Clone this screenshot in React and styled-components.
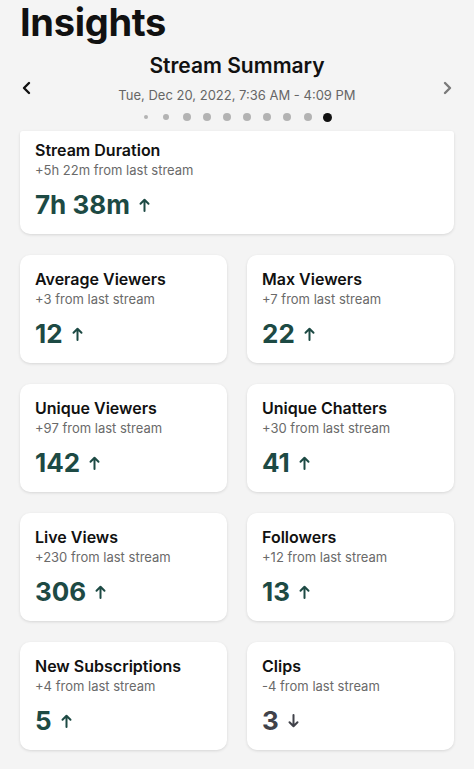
import styled, { createGlobalStyle } from 'styled-components'

const Global = createGlobalStyle`
  body {
    margin: 0;
    background: #f4f4f4;
    font-family: Inter, "Noto Sans", sans-serif;
    color: #111;
  }
`

const Page = styled.div`
  width: 474px;
  height: 769px;
  overflow: hidden;
  background: #f4f4f4;
`

const Header = styled.header`
  padding: 0 20px 9px;
`

const Title = styled.h1`
  margin: 0;
  font-size: 38px;
  line-height: 44px;
  font-weight: 700;
  letter-spacing: -0.3px;
`

const Nav = styled.div`
  display: flex;
  align-items: center;
  margin-top: 9px;
`

const NavButton = styled.button`
  border: 0;
  background: none;
  padding: 0;
  width: 14px;
  display: flex;
  justify-content: center;
  color: ${({ $muted }) => ($muted ? '#7a7a7a' : '#111')};
`

const Center = styled.div`
  flex: 1;
  display: flex;
  flex-direction: column;
  align-items: center;
`

const Summary = styled.h2`
  margin: 0;
  font-size: 21px;
  line-height: 26px;
  font-weight: 600;
`

const DateLine = styled.div`
  margin-top: 6px;
  font-size: 13px;
  line-height: 20px;
  color: #666;
`

const Dots = styled.div`
  display: flex;
  margin-top: 7px;
  height: 10px;
  align-items: center;
`

const DotSlot = styled.span`
  width: 20.2px;
  display: flex;
  justify-content: center;
`

const Dot = styled.span`
  width: ${({ $size }) => $size}px;
  height: ${({ $size }) => $size}px;
  border-radius: 50%;
  background: ${({ $active }) => ($active ? '#111' : '#b3b3b3')};
`

const Content = styled.main`
  padding: 0 20px;
  display: flex;
  flex-direction: column;
  gap: 21px;
`

const Grid = styled.div`
  display: grid;
  grid-template-columns: 1fr 1fr;
  column-gap: 20px;
  row-gap: 21px;
`

const Card = styled.section`
  background: #fff;
  border-radius: ${({ $clipped }) => ($clipped ? '3px 3px 10px 10px' : '10px')};
  box-shadow: 0 1px 3px rgba(0, 0, 0, 0.12);
  padding: ${({ $clipped }) => ($clipped ? '9px' : '14px')} 15px 13px;
`

const CardTitle = styled.div`
  font-size: 16px;
  line-height: 20px;
  font-weight: 600;
  color: #111;
`

const Delta = styled.div`
  font-size: 13px;
  line-height: 20px;
  color: #6a6a6a;
`

const Value = styled.div`
  margin-top: 9px;
  display: flex;
  align-items: center;
  gap: 9px;
  font-size: 26px;
  line-height: 32px;
  font-weight: 700;
  color: ${({ $down }) => ($down ? '#41424a' : '#1d4a44')};
`

const ArrowIcon = ({ down }) => (
  <svg width="11" height="14" viewBox="0 0 11 14" fill="none" stroke="currentColor" strokeWidth="2" strokeLinecap="round" strokeLinejoin="round" style={{ transform: down ? 'rotate(180deg)' : 'none' }}>
    <path d="M5.5 13V2M1.5 5.8L5.5 1.8L9.5 5.8" />
  </svg>
)

const Chevron = ({ right }) => (
  <svg width="10" height="14" viewBox="0 0 10 14" fill="none" stroke="currentColor" strokeWidth="2.4" strokeLinecap="round" strokeLinejoin="round">
    <path d={right ? 'M3 2L8 7L3 12' : 'M7 2L2 7L7 12'} />
  </svg>
)

function Stat({ title, delta, value, down, clipped }) {
  return (
    <Card $clipped={clipped}>
      <CardTitle>{title}</CardTitle>
      <Delta>{delta} from last stream</Delta>
      <Value $down={down}>
        {value}
        <ArrowIcon down={down} />
      </Value>
    </Card>
  )
}

const dots = [4, 6, 8, 8, 8, 8, 8, 8, 8, 9]

const stats = [
  { title: 'Average Viewers', delta: '+3', value: '12' },
  { title: 'Max Viewers', delta: '+7', value: '22' },
  { title: 'Unique Viewers', delta: '+97', value: '142' },
  { title: 'Unique Chatters', delta: '+30', value: '41' },
  { title: 'Live Views', delta: '+230', value: '306' },
  { title: 'Followers', delta: '+12', value: '13' },
  { title: 'New Subscriptions', delta: '+4', value: '5' },
  { title: 'Clips', delta: '-4', value: '3', down: true },
]

export default function App() {
  return (
    <Page>
      <Global />
      <Header>
        <Title>Insights</Title>
        <Nav>
          <NavButton aria-label="Previous">
            <Chevron />
          </NavButton>
          <Center>
            <Summary>Stream Summary</Summary>
            <DateLine>Tue, Dec 20, 2022, 7:36 AM - 4:09 PM</DateLine>
            <Dots>
              {dots.map((s, i) => (
                <DotSlot key={i}>
                  <Dot $size={s} $active={i === dots.length - 1} />
                </DotSlot>
              ))}
            </Dots>
          </Center>
          <NavButton $muted aria-label="Next">
            <Chevron right />
          </NavButton>
        </Nav>
      </Header>
      <Content>
        <Stat clipped title="Stream Duration" delta="+5h 22m" value="7h 38m" />
        <Grid>
          {stats.map((s) => (
            <Stat key={s.title} {...s} />
          ))}
        </Grid>
      </Content>
    </Page>
  )
}
